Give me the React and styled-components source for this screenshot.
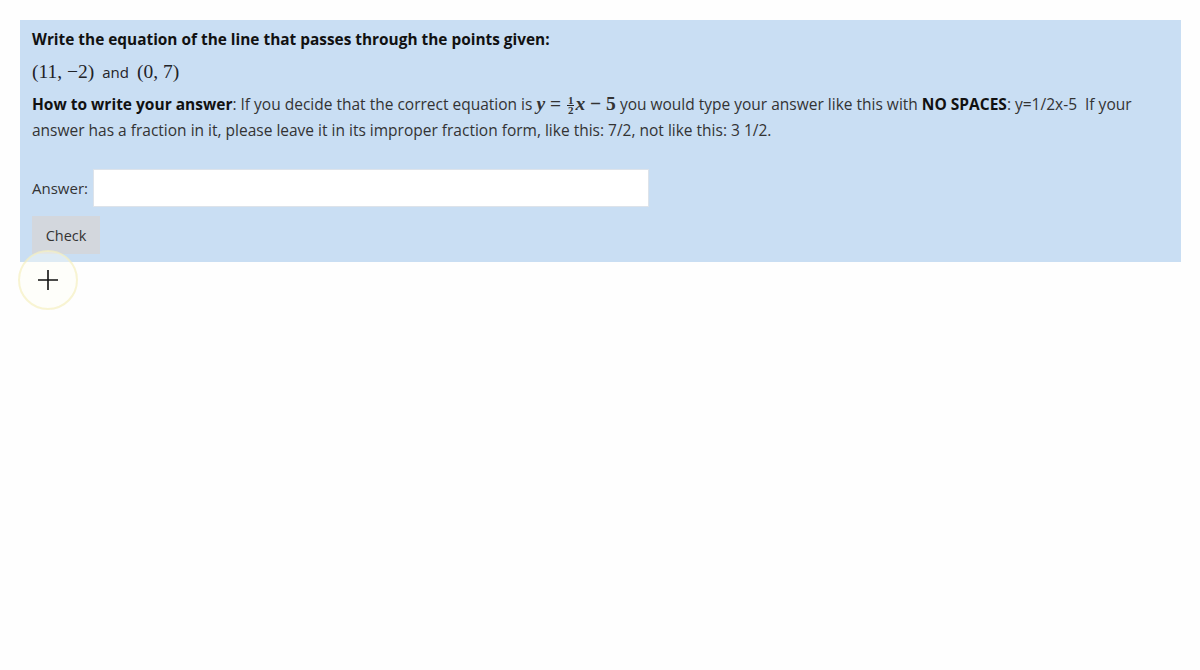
import { useState } from "react"
import styled, { createGlobalStyle } from "styled-components"

const Global = createGlobalStyle`
  html, body {
    margin: 0;
    padding: 0;
    background: #fefefe;
    font-family: "Open Sans", "Noto Sans", sans-serif;
    color: #1f2328;
  }
  #root {
    min-height: 670px;
  }
`

const Page = styled.div`
  padding: 20px 19px 0 20px;
  position: relative;
  min-height: 650px;
`

const Panel = styled.div`
  background: #c9def3;
  padding: 9px 12px 8px 12px;
`

const Title = styled.div`
  font-weight: 700;
  font-size: 15.4px;
  line-height: 22px;
  color: #111;
`

const Points = styled.div`
  margin-top: 9px;
  font-size: 15px;
  line-height: 24px;
  display: flex;
  align-items: baseline;
  gap: 8px;
`

const Math = styled.span`
  font-family: "Liberation Serif", "DejaVu Serif", serif;
  font-size: 19.5px;
  line-height: 1;
  font-weight: ${(p) => (p.$bold ? 700 : 400)};
  white-space: nowrap;
`

const Frac = styled.span`
  display: inline-flex;
  flex-direction: column;
  align-items: center;
  vertical-align: middle;
  font-family: "Liberation Serif", serif;
  font-size: 11px;
  line-height: 9px;
  margin: 0 1px;
  font-weight: 700;
`

const FracTop = styled.span`
  border-bottom: 1px solid #222;
  padding: 0 1px;
`

const Instructions = styled.p`
  margin: 7px 0 0;
  font-size: 15.5px;
  line-height: 26px;
  color: #333;
  b {
    color: #111;
  }
`

const AnswerRow = styled.div`
  margin-top: 26px;
  display: flex;
  align-items: center;
  gap: 5px;
  font-size: 15px;
  color: #333;
`

const Input = styled.input`
  width: 556px;
  height: 38px;
  box-sizing: border-box;
  border: 1px solid #dde3ea;
  background: #fff;
  outline: none;
  font-size: 15px;
  padding: 0 8px;
`

const CheckButton = styled.button`
  margin-top: 9px;
  width: 68px;
  height: 38px;
  border: none;
  background: #d3d7dd;
  color: #333;
  font-family: "Open Sans", "Noto Sans", sans-serif;
  font-size: 14.5px;
  cursor: pointer;
`

const Cursor = styled.svg`
  position: absolute;
  left: 16px;
  top: 248px;
  pointer-events: none;
`

export default function App() {
  const [answer, setAnswer] = useState("")
  return (
    <>
      <Global />
      <Page>
        <Panel>
          <Title>Write the equation of the line that passes through the points given:</Title>
          <Points>
            <Math>(11, −2)</Math>
            <span>and</span>
            <Math>(0, 7)</Math>
          </Points>
          <Instructions>
            <b>How to write your answer</b>: If you decide that the correct equation is{" "}
            <Math $bold><i>y</i> = </Math>
            <Frac>
              <FracTop>1</FracTop>
              <span>2</span>
            </Frac>
            <Math $bold><i>x</i> − 5</Math> you would type your answer like this with{" "}
            <b>NO SPACES</b>: y=1/2x-5&nbsp; If your answer has a fraction in it, please leave it in its
            improper fraction form, like this: 7/2, not like this: 3 1/2.
          </Instructions>
          <AnswerRow>
            <span>Answer:</span>
            <Input value={answer} onChange={(e) => setAnswer(e.target.value)} />
          </AnswerRow>
          <CheckButton>Check</CheckButton>
        </Panel>
        <Cursor width="64" height="64" viewBox="0 0 64 64">
          <circle cx="32" cy="32" r="29" fill="#fffef4" fillOpacity="0.4" stroke="#f5f0c0" strokeOpacity="0.7" strokeWidth="2" />
          <path d="M32 22v20M22 32h20" stroke="#111" strokeWidth="1.6" />
        </Cursor>
      </Page>
    </>
  )
}
